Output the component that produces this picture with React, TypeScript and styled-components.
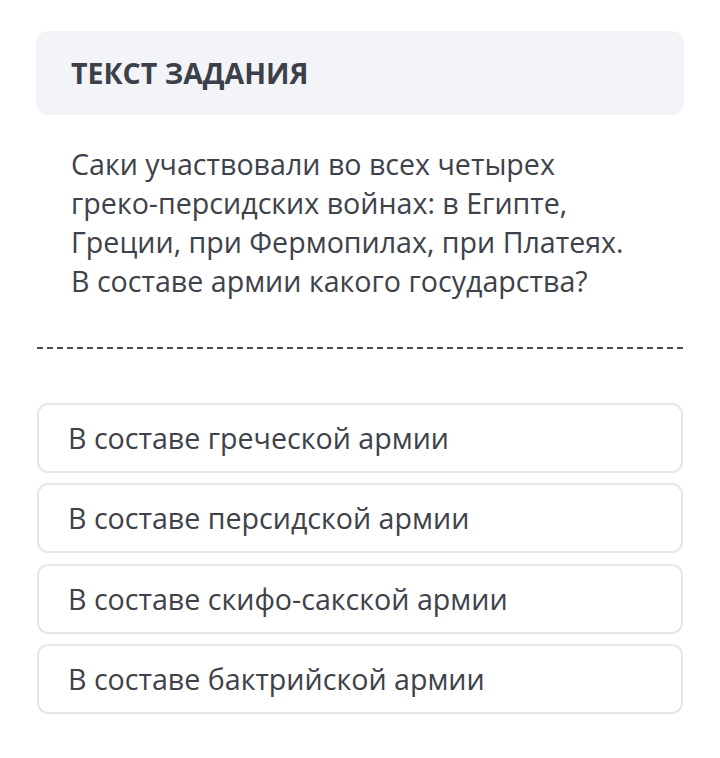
import styled, { createGlobalStyle } from 'styled-components'

const GlobalStyle = createGlobalStyle`
  html, body {
    margin: 0;
    padding: 0;
    background: #ffffff;
  }
  body {
    font-family: 'Open Sans', 'Noto Sans', sans-serif;
    color: #3e424a;
  }
`

const Page = styled.div`
  width: 720px;
  height: 758px;
  box-sizing: border-box;
  padding: 31px 36px 0 36px;
  display: flex;
  flex-direction: column;
`

const Header = styled.div`
  height: 84px;
  box-sizing: border-box;
  background: #f2f4f7;
  border-radius: 12px;
  display: flex;
  align-items: center;
  padding: 0 35px;
`

const HeaderTitle = styled.h2`
  margin: 0;
  font-size: 28.5px;
  font-weight: 700;
  letter-spacing: 0;
  text-transform: uppercase;
  color: #3c4049;
`

const Question = styled.p`
  margin: 0;
  padding: 29px 36px 0 35px;
  font-size: 28.6px;
  line-height: 39px;
  color: #3e424a;
`

const Divider = styled.div`
  margin-top: 47px;
  margin-left: 1px;
  margin-right: 1px;
  border-top: 2px dashed #4a4d55;
`

const Options = styled.div`
  margin-top: 54px;
  display: flex;
  flex-direction: column;
  gap: 10.3px;
`

const Option = styled.button`
  height: 70px;
  box-sizing: border-box;
  margin: 0 1px;
  border: 2px solid #e4e6ea;
  border-radius: 11px;
  background: #ffffff;
  display: flex;
  align-items: center;
  padding: 0 0 1px 29px;
  font-family: 'Open Sans', 'Noto Sans', sans-serif;
  font-size: 28.6px;
  color: #3e424a;
  text-align: left;
  cursor: pointer;
`

const answers = [
  'В составе греческой армии',
  'В составе персидской армии',
  'В составе скифо-сакской армии',
  'В составе бактрийской армии',
]

const App = () => {
  return (
    <>
      <GlobalStyle />
      <Page>
        <Header>
          <HeaderTitle>Текст задания</HeaderTitle>
        </Header>
        <Question>
          Саки участвовали во всех четырех
          <br />
          греко-персидских войнах: в Египте,
          <br />
          Греции, при Фермопилах, при Платеях.
          <br />В составе армии какого государства?
        </Question>
        <Divider />
        <Options>
          {answers.map((a) => (
            <Option key={a}>{a}</Option>
          ))}
        </Options>
      </Page>
    </>
  )
}

export default App
